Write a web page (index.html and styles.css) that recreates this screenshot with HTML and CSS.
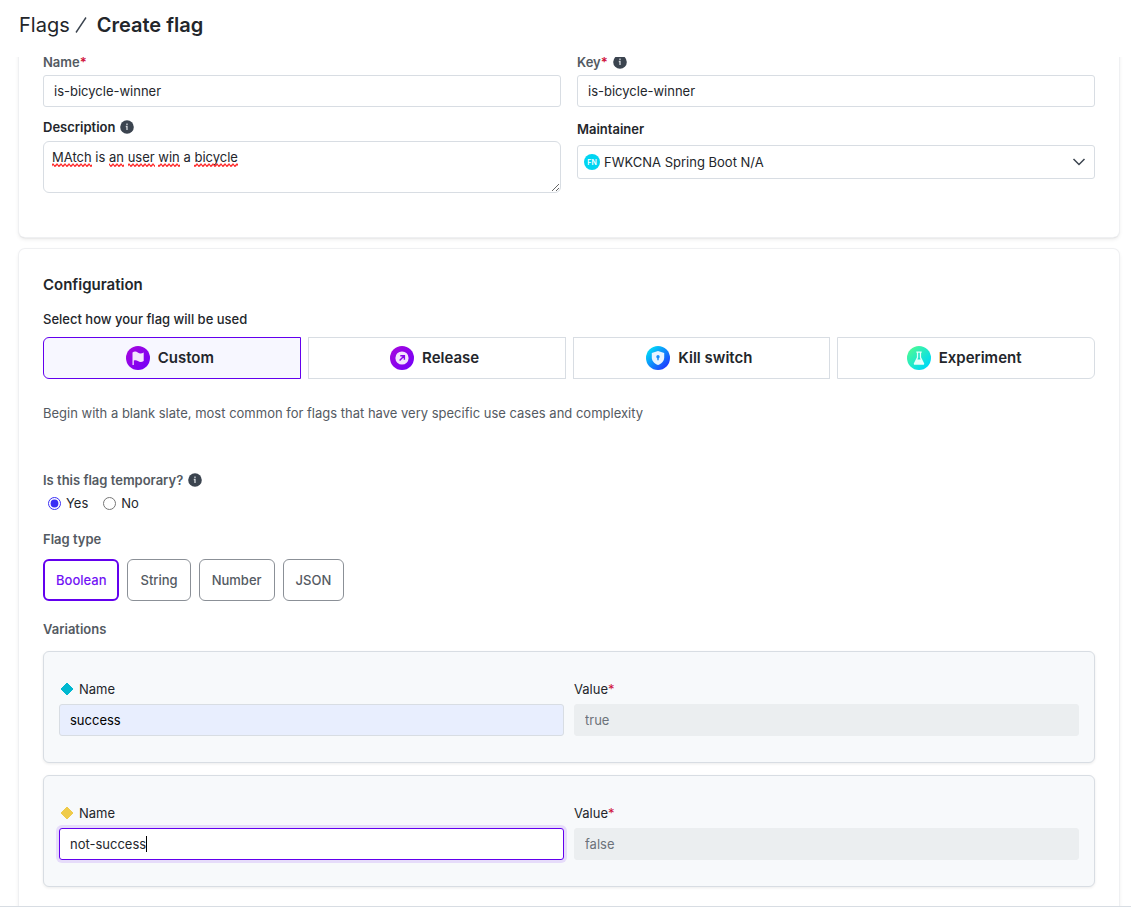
FILE: index.html
```
<!DOCTYPE html>
<html lang="en">

<head>
    <meta charset="UTF-8">
    <meta name="viewport" content="width=device-width, initial-scale=1.0">
    <title>Create flag</title>
    <link rel="stylesheet" href="styles.css">
</head>

<body>
    <!-- shared icon -->
    <svg class="sprite" aria-hidden="true">
        <symbol id="info" viewBox="0 0 14 14">
            <circle cx="7" cy="7" r="6.8" fill="#3b444f" />
            <path d="M7 3.6v1.400M5.800 6.500h1.200v3.600" fill="none" stroke="#d5d9dd" stroke-width="1.300" />
        </symbol>
    </svg>

    <header class="page-header">
        <nav class="breadcrumb">
            <a href="#">Flags</a>
            <svg class="slash" width="12" height="18" viewBox="0 0 12 18">
                <path d="M1 16.5L11 1.5" stroke="#3b444f" stroke-width="1.4" />
            </svg>
            <h1>Create flag</h1>
        </nav>
    </header>

    <main class="content">
        <section class="card card-details">
            <div class="form-grid">
                <div class="field">
                    <label for="flag-name" class="muted">Name<span class="required">*</span></label>
                    <input type="text" id="flag-name" class="text-input" value="is-bicycle-winner">
                </div>
                <div class="field">
                    <label for="flag-key" class="muted">Key<span class="required">*</span>
                        <svg class="info"><use href="#info" /></svg>
                    </label>
                    <input type="text" id="flag-key" class="text-input" value="is-bicycle-winner">
                </div>
                <div class="field">
                    <label for="description">Description
                        <svg class="info"><use href="#info" /></svg>
                    </label>
                    <div class="textarea-wrap">
                        <textarea id="description" spellcheck="false">MAtch is an user win a bicycle</textarea>
                        <!-- spelling marks -->
                        <svg class="spelling" width="190" height="4" viewBox="0 0 190 4">
                            <defs>
                                <pattern id="wave" width="4" height="4" patternUnits="userSpaceOnUse">
                                    <path d="M-1 4L1 1L3 3.5L5 0.5" fill="none" stroke="#f22" stroke-width="1.2" />
                                </pattern>
                            </defs>
                            <g fill="url(#wave)">
                                <rect x="0" width="40" height="4" />
                                <rect x="57" width="15" height="4" />
                                <rect x="76" width="27" height="4" />
                                <rect x="106" width="22" height="4" />
                                <rect x="142" width="44" height="4" />
                            </g>
                        </svg>
                    </div>
                </div>
                <div class="field">
                    <label for="maintainer" class="tall">Maintainer</label>
                    <div class="select-wrap">
                        <span class="avatar">FN</span>
                        <select id="maintainer">
                            <option>FWKCNA Spring Boot N/A</option>
                        </select>
                        <svg class="chevron" width="14" height="8" viewBox="0 0 14 8">
                            <path d="M1.5 1L7 6.5L12.500 1" fill="none" stroke="#3b444f" stroke-width="1.5" />
                        </svg>
                    </div>
                </div>
            </div>
        </section>

        <section class="card card-config">
            <h2>Configuration</h2>
            <p class="label">Select how your flag will be used</p>
            <div class="purposes">
                <button type="button" class="purpose selected">
                    <svg width="24" height="24" viewBox="0 0 24 24">
                        <defs>
                            <linearGradient id="purple" x1="0" y1="0" x2="1" y2="1">
                                <stop offset="0" stop-color="#a907dc" />
                                <stop offset="1" stop-color="#7100fa" />
                            </linearGradient>
                        </defs>
                        <circle cx="12" cy="12" r="12" fill="url(#purple)" />
                        <path d="M6.500 6.400c1.800-1.200 3.800-1.200 5.300.2 1.700 1.300 3.900 1.300 5.900-.1v8.600c-2 1.400-4.100 1.300-5.800 0-1.300-1.100-2.700-1.200-4.100-.5V19H6.500z" fill="#f3e4fd" />
                    </svg>
                    Custom
                </button>
                <button type="button" class="purpose">
                    <svg width="24" height="24" viewBox="0 0 24 24">
                        <circle cx="12" cy="12" r="12" fill="url(#purple)" />
                        <circle cx="12" cy="12" r="6.600" fill="#f3e4fd" />
                        <path d="M9.600 14.400L14 10M10.300 9.700h4.100v4.100" fill="none" stroke="#8a04ea" stroke-width="1.400" />
                    </svg>
                    Release
                </button>
                <button type="button" class="purpose">
                    <svg width="24" height="24" viewBox="0 0 24 24">
                        <defs>
                            <linearGradient id="blue" x1="0" y1="0" x2="1" y2="1">
                                <stop offset="0.1" stop-color="#00e0f7" />
                                <stop offset="0.9" stop-color="#1d33ff" />
                            </linearGradient>
                        </defs>
                        <circle cx="12" cy="12" r="12" fill="url(#blue)" />
                        <path d="M12 5l6.200 2v4.500c0 3.700-2.500 6-6.200 7.500-3.700-1.500-6.200-3.800-6.200-7.500V7z" fill="#e8f4ff" />
                        <circle cx="12" cy="10.800" r="1.700" fill="#168bfb" />
                        <path d="M12 11v3.200" stroke="#168bfb" stroke-width="1.400" />
                    </svg>
                    Kill switch
                </button>
                <button type="button" class="purpose">
                    <svg width="24" height="24" viewBox="0 0 24 24">
                        <defs>
                            <linearGradient id="green" x1="0" y1="0" x2="1" y2="1">
                                <stop offset="0.1" stop-color="#4dfa95" />
                                <stop offset="0.8" stop-color="#00dcf0" />
                            </linearGradient>
                        </defs>
                        <circle cx="12" cy="12" r="12" fill="url(#green)" />
                        <path d="M9.300 5.500h5.400v1.300h-.6v4.400l3 6c.4.900 0 1.500-.9 1.500H7.800c-.9 0-1.300-.6-.9-1.500l3-6V6.800h-.6z" fill="#e6fffb" />
                        <path d="M11.200 6.800h1.600v4.700l.8 1.900h-3.200l.8-1.900z" fill="#1be6cb" />
                    </svg>
                    Experiment
                </button>
            </div>
            <p class="hint">Begin with a blank slate, most common for flags that have very specific use cases and complexity</p>

            <div class="label muted temporary">Is this flag temporary?
                <svg class="info"><use href="#info" /></svg>
            </div>
            <div class="radios">
                <label><input type="radio" name="temporary" checked>Yes</label>
                <label><input type="radio" name="temporary">No</label>
            </div>

            <p class="label muted flag-type">Flag type</p>
            <div class="types">
                <button type="button" class="type selected">Boolean</button>
                <button type="button" class="type">String</button>
                <button type="button" class="type">Number</button>
                <button type="button" class="type">JSON</button>
            </div>

            <p class="label muted variations-title">Variations</p>
            <div class="variations">
                <div class="variation">
                    <div class="variation-field">
                        <label for="name-1"><svg class="diamond teal" viewBox="0 0 14 14"><path d="M7 1L13 7L7 13L1 7z" /></svg>Name</label>
                        <input type="text" id="name-1" class="text-input autofilled" value="success">
                    </div>
                    <div class="variation-field">
                        <label for="value-1">Value<span class="required">*</span></label>
                        <input type="text" id="value-1" class="text-input" value="true" disabled>
                    </div>
                </div>
                <div class="variation">
                    <div class="variation-field">
                        <label for="name-2"><svg class="diamond yellow" viewBox="0 0 14 14"><path d="M7 1L13 7L7 13L1 7z" /></svg>Name</label>
                        <div class="input-wrap">
                            <input type="text" id="name-2" class="text-input focused" value="not-success">
                            <span class="caret"></span>
                        </div>
                    </div>
                    <div class="variation-field">
                        <label for="value-2">Value<span class="required">*</span></label>
                        <input type="text" id="value-2" class="text-input" value="false" disabled>
                    </div>
                </div>
            </div>
        </section>
    </main>

    <footer class="page-footer"></footer>
</body>

</html>
```
FILE: styles.css
```
* {
    box-sizing: border-box;
}

body {
    margin: 0;
    height: 100vh;
    display: flex;
    flex-direction: column;
    overflow: hidden;
    background-color: #fff;
    color: #23262b;
    font-family: Inter, sans-serif;
    font-size: 13px;
    line-height: 20px;
}

h1,
h2,
p {
    margin: 0;
}

button,
input,
select,
textarea {
    font: inherit;
    color: inherit;
}

.sprite {
    position: absolute;
    width: 0;
    height: 0;
}

/* Header */
.page-header {
    flex: none;
    height: 57px;
    padding: 13px 19px;
}

.breadcrumb {
    display: flex;
    align-items: center;
    font-size: 20px;
    line-height: 24px;
}

.breadcrumb a {
    color: inherit;
    font-weight: 400;
    text-decoration: none;
}

.breadcrumb h1 {
    font-size: 20px;
    font-weight: 600;
}

.slash {
    margin: 0 10px 0 5px;
}

/* Cards */
.content {
    flex: 1;
    min-height: 0;
    overflow: hidden;
    padding: 0 12px 0 19px;
}

.card {
    padding: 24px;
    border-radius: 6px;
    background-color: #fff;
    box-shadow: 0 0 0 1px #eff0f2, 0 1px 1px rgba(0, 0, 0, 0.2), 0 2px 4px rgba(0, 0, 0, 0.1);
}

/* scrolled partly under the header */
.card-details {
    margin-top: -27px;
    padding-bottom: 44px;
}

.card-config {
    margin-top: 12px;
}

.form-grid {
    display: grid;
    grid-template-columns: 1fr 1fr;
    gap: 12px 16px;
    align-items: start;
}

.field label {
    display: flex;
    align-items: center;
    margin-bottom: 6px;
    font-weight: 600;
    line-height: 16px;
}

.field label.tall {
    line-height: 20px;
}

.muted {
    color: #545a62;
}

.field label.muted {
    margin-bottom: 5px;
}

.required {
    color: #d0103a;
}

.info {
    width: 14px;
    height: 14px;
    margin-left: 5px;
}

.text-input {
    display: block;
    width: 100%;
    height: 32px;
    padding: 0 10px;
    border: 1px solid #d8dde3;
    border-radius: 3px;
    background-color: #fff;
}

.text-input:disabled {
    border-color: #ebeef0;
    background-color: #ebeef0;
    color: #6c727a;
}

.textarea-wrap,
.select-wrap,
.input-wrap {
    position: relative;
}

textarea {
    display: block;
    width: 100%;
    height: 52px;
    padding: 5px 8px;
    border: 1px solid #d8dde3;
    border-radius: 6px;
    resize: vertical;
}

.spelling {
    position: absolute;
    top: 22px;
    left: 9px;
    pointer-events: none;
}

select {
    display: block;
    width: 100%;
    height: 34px;
    padding: 0 26px;
    appearance: none;
    border: 1px solid #d8dde3;
    border-radius: 3px;
    background-color: #fff;
}

.avatar {
    position: absolute;
    top: 9px;
    left: 7px;
    width: 16px;
    height: 16px;
    border-radius: 50%;
    background-color: #00d5f2;
    color: #fff;
    font-size: 7px;
    font-weight: 600;
    line-height: 17px;
    text-align: center;
}

.chevron {
    position: absolute;
    top: 13px;
    right: 9px;
    pointer-events: none;
}

/* Configuration */
.card-config h2 {
    font-size: 15px;
    font-weight: 600;
    line-height: 24px;
}

.label {
    display: flex;
    align-items: center;
    margin-top: 12px;
    font-weight: 500;
}

.label.muted {
    font-weight: 600;
}

.purposes {
    display: grid;
    grid-template-columns: repeat(4, 1fr);
    gap: 7px;
    margin-top: 8px;
}

.purpose {
    display: flex;
    align-items: center;
    justify-content: center;
    gap: 8px;
    height: 42px;
    padding: 0 4px 0 0;
    border: 1px solid #d8dde3;
    background-color: #fff;
    font-size: 15px;
    font-weight: 600;
    cursor: pointer;
}

.purpose:first-child {
    border-radius: 6px 0 0 6px;
}

.purpose:last-child {
    border-radius: 0 6px 6px 0;
}

.purpose.selected {
    border-color: #6300ee;
    background-color: #f7f7ff;
}

.hint {
    margin-top: 24px;
    color: #545a62;
}

.label.temporary {
    margin-top: 47px;
}

.radios {
    display: flex;
    gap: 15px;
    margin-top: 3px;
    padding-left: 5px;
}

.radios label {
    display: flex;
    align-items: center;
    gap: 5px;
}

.radios input {
    width: 13px;
    height: 13px;
    margin: 0;
    accent-color: #3a2ff5;
}

.label.flag-type {
    margin-top: 16px;
}

.types {
    display: flex;
    gap: 8px;
    margin-top: 10px;
}

.type {
    height: 42px;
    padding: 0 12px;
    border: 1px solid #8b9097;
    border-radius: 6px;
    background-color: #fff;
    color: #545a62;
    font-weight: 500;
    cursor: pointer;
}

.type.selected {
    padding: 0 11px;
    border: 2px solid #6300ee;
    color: #7213f5;
}

.label.variations-title {
    margin-top: 18px;
}

.variations {
    display: grid;
    gap: 12px;
    margin-top: 12px;
}

.variation {
    display: grid;
    grid-template-columns: 1fr 1fr;
    gap: 10px;
    padding: 27px 15px 26px;
    border: 1px solid #d8dde3;
    border-radius: 6px;
    background-color: #f7f9fb;
    box-shadow: 0 1px 3px rgba(0, 0, 0, 0.08);
}

.variation-field label {
    display: flex;
    align-items: center;
    margin-bottom: 5px;
}

.diamond {
    width: 14px;
    height: 14px;
    margin: 0 5px 0 1px;
    stroke-width: 1;
    stroke-linejoin: round;
}

.teal {
    fill: #00b8d0;
    stroke: #00b8d0;
}

.yellow {
    fill: #efcb4b;
    stroke: #efcb4b;
}

.text-input.autofilled {
    background-color: #e8eefe;
    color: #000;
}

.text-input.focused {
    border-color: #6300ee;
    box-shadow: 0 0 0 3px #e6dcfa;
}

.caret {
    position: absolute;
    top: 8px;
    left: 87px;
    width: 1px;
    height: 16px;
    background-color: #000;
}

.page-footer {
    flex: none;
    height: 8px;
    border-top: 1px solid #d8dde3;
}
```
